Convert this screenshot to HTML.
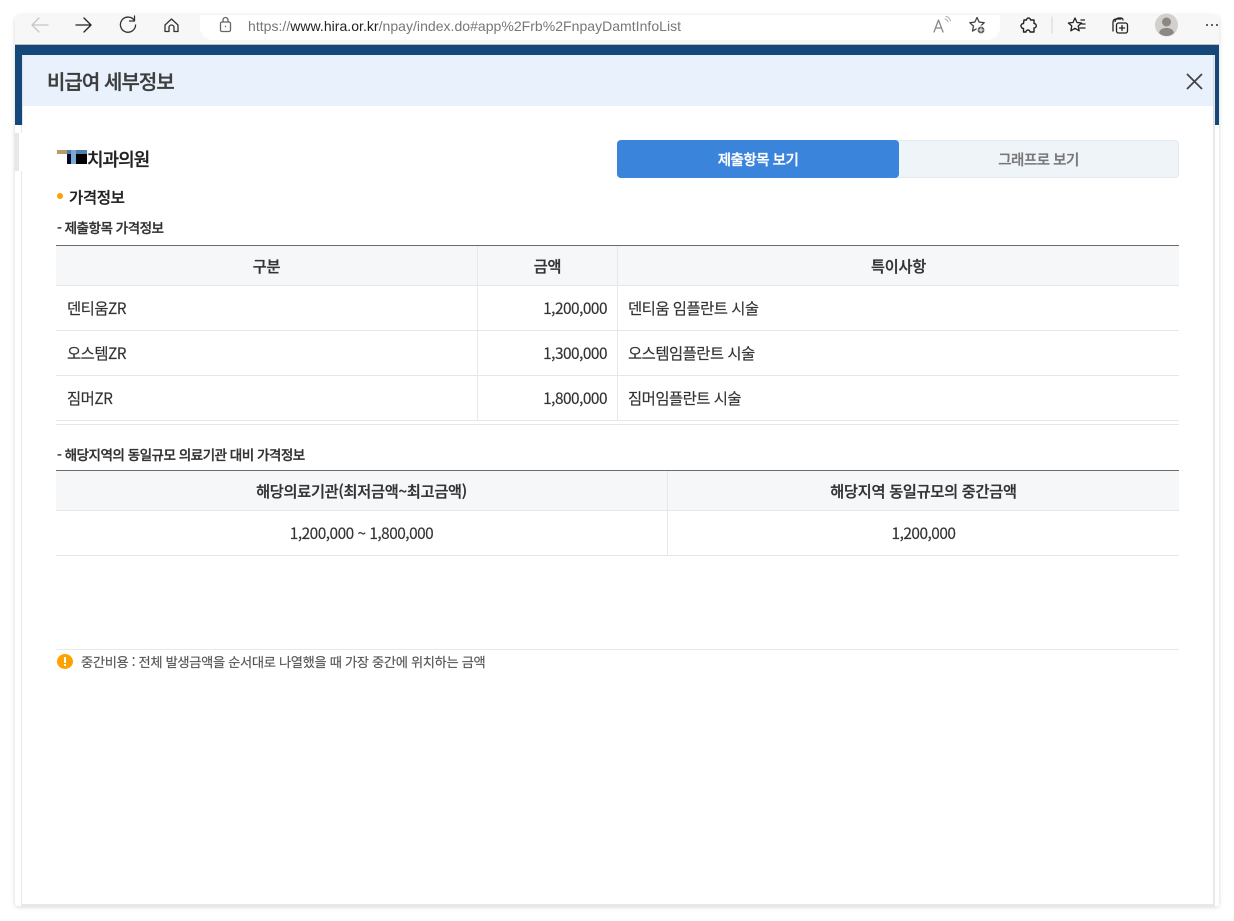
<!DOCTYPE html>
<html lang="ko"><head><meta charset="utf-8"><title>비급여 세부정보</title>
<style>
html,body{margin:0;padding:0;background:#fff}
body{width:1234px;height:921px;position:relative;overflow:hidden;font-family:"Noto Sans CJK KR","Liberation Sans",sans-serif;color:#333}
.a{position:absolute}
.t{position:absolute;white-space:nowrap;line-height:20px;height:20px;-webkit-text-stroke:.15px currentColor}
.b{font-weight:500;-webkit-text-stroke:.3px currentColor}
.h{font-size:15.2px;letter-spacing:-.25px}
.r{font-size:15.4px;letter-spacing:-.5px}
.l{position:absolute;height:1px;background:#e6e6e6}
.v{position:absolute;width:1px;background:#e8e8e8}
svg{position:absolute;overflow:visible}
</style></head><body>
<!-- window -->
<div class="a" style="left:15px;top:15px;width:1204px;height:891px;background:#fff;border-radius:5px 5px 3px 3px;box-shadow:0 1px 5px rgba(0,0,0,.16)"></div>
<div class="a" style="left:15px;top:15px;width:1204px;height:29px;background:#f7f7f7;border-radius:5px 5px 0 0"></div>
<div class="a" style="left:15px;top:44px;width:1204px;height:1px;background:#bdbdbd"></div>
<div class="a" style="left:15px;top:45px;width:1204px;height:80px;background:#14477a"></div>
<div class="a" style="left:15px;top:125px;width:7px;height:8px;background:#fff"></div>
<div class="a" style="left:14px;top:133px;width:5px;height:38px;background:#e8e8e8"></div>
<div class="a" style="left:21px;top:125px;width:2px;height:8px;background:#e8e8e8"></div>
<div class="a" style="left:21px;top:171px;width:2px;height:735px;background:#e8e8e8"></div>
<div class="a" style="left:1213px;top:55px;width:2px;height:851px;background:#e8e8e8"></div>
<div class="a" style="left:1215px;top:125px;width:4px;height:781px;background:#fff"></div>
<div class="a" style="left:21px;top:904px;width:1194px;height:2px;background:#e8e8e8"></div>
<!-- address bar -->
<div class="a" style="left:200px;top:15px;width:800px;height:25px;background:#fff;border-radius:0 0 13px 13px"></div>
<svg style="left:0;top:0" width="1234" height="45" viewBox="0 0 1234 45" fill="none" stroke="#333" stroke-width="1.300" stroke-linecap="round" stroke-linejoin="round">
<path d="M32 25H48M39 18l-7 7 7 7" stroke="#c6c6c6"/>
<path d="M76 25H91M84 18l7 7-7 7" stroke="#222"/>
<path d="M134 20a7.600 7.600 0 1 0 1.600 5M134.500 16v5h-5" stroke="#333"/>
<path d="M165 25l6.500-6 6.500 6v6.500h-4v-4a2.500 2.500 0 0 0-5 0v4h-4z" stroke="#333"/>
<rect x="220.500" y="22" width="10" height="9.500" rx="1.500" stroke="#666"/><path d="M223 22v-2a2.500 2.500 0 0 1 5 0v2" stroke="#666"/><circle cx="225.500" cy="26.500" r=".7" fill="#666" stroke="none"/>
<path d="M934 32l4.500-12 4.500 12M935.500 28h6" stroke="#888"/><path d="M945 19a4 4 0 0 1 3 3M946 16.500a6 6 0 0 1 4.500 4.500" stroke="#aaa" stroke-width="1"/>
<path d="M977 17.500l2.200 4.600 5 .6-3.700 3.400 1 5-4.500-2.500-4.500 2.500 1-5-3.700-3.400 5-.6z" stroke="#444"/><circle cx="981" cy="30" r="4" fill="#555" stroke="#f7f7f7"/><path d="M979 30h4M981 28v4" stroke="#fff" stroke-width="1"/>
<path d="M1024 20h2.500a2 2 0 0 1 4 0h3.500v3.500a2.200 2.200 0 0 1 0 4.500v4h-4a2 2 0 0 0-4 0h-2.500v-3.500a2.400 2.400 0 0 1 0-5z" stroke="#222" stroke-width="1.400"/>
<path d="M1052 17v16" stroke="#ddd"/>
<path d="M1075 18l2 4.500 4.600.5-3.400 3 1 4.800-4.200-2.500-4.200 2.500 1-4.800-3.400-3 4.600-.5zM1081 20h3.500M1082 24h3M1080 28h5" stroke="#222"/>
<path d="M1113 31v-9a3 3 0 0 1 3-3h5" stroke="#222"/><path d="M1115 21.500a4 4 0 0 1 4-3.500h2a2 2 0 0 1 2 2" stroke="#222"/><rect x="1116.500" y="23" width="11" height="10" rx="2" stroke="#222"/><path d="M1122 25.500v5M1119.500 28h5" stroke="#222"/>
<circle cx="1166.500" cy="25" r="11.500" fill="#d2d0cd" stroke="none"/><circle cx="1166.500" cy="22" r="4.500" fill="#8b8884" stroke="none"/><path d="M1159 33c1-4 4-5 7.500-5s6.500 1 7.500 5a11 11 0 0 1-15 0z" fill="#8b8884" stroke="none"/>
<circle cx="1207" cy="25" r="1" fill="#333" stroke="none"/><circle cx="1212" cy="25" r="1" fill="#333" stroke="none"/><circle cx="1217" cy="25" r="1" fill="#333" stroke="none"/>
</svg>
<div class="a" style="left:248px;top:16px;line-height:20px;white-space:nowrap;font-size:14px;font-family:'Liberation Sans',sans-serif;color:#777;letter-spacing:.03px">https://<span style="color:#222">www.hira.or.kr</span>/npay/index.do#app%2Frb%2FnpayDamtInfoList</div>
<!-- modal -->
<div class="a" style="left:22px;top:55px;width:1191px;height:51px;background:#e9f1fc"></div>
<div class="a" style="left:22px;top:106px;width:1191px;height:798px;background:#fff"></div>
<div class="a" style="left:22px;top:55px;width:1px;height:70px;background:#dfe4ea"></div>
<div class="a" style="left:1213px;top:55px;width:1px;height:70px;background:#d6dbe1"></div>
<div class="t b" style="left:47px;top:71px;font-size:20px;color:#3d3d3d;letter-spacing:-.95px">비급여 세부정보</div>
<svg style="left:1186px;top:73px" width="17" height="17" fill="none" stroke="#444" stroke-width="1.800"><path d="M1 1l15 15M16 1L1 16"/></svg>
<!-- hospital name -->
<div class="a" style="left:57px;top:150px;width:10px;height:4px;background:#b99a66"></div>
<div class="a" style="left:67px;top:150px;width:20px;height:4px;background:#4f7fae"></div>
<div class="a" style="left:67px;top:154px;width:4px;height:10px;background:#06062a"></div>
<div class="a" style="left:71px;top:150px;width:5px;height:14px;background:#7aa9d6"></div>
<div class="a" style="left:76px;top:154px;width:11px;height:10px;background:#000"></div>
<div class="t b" style="left:87px;top:149px;font-size:18px;color:#222;letter-spacing:-1px">치과의원</div>
<!-- tabs -->
<div class="a" style="left:617px;top:140px;width:562px;height:38px;box-sizing:border-box;background:#eff4f9;border:1px solid #e4e9ef;border-radius:4px"></div>
<div class="a" style="left:617px;top:140px;width:282px;height:38px;background:#3a84dc;border-radius:4px"></div>
<div class="t b" style="left:617px;top:150px;width:282px;text-align:center;font-size:14.500px;color:#fff;letter-spacing:-.5px">제출항목 보기</div>
<div class="t b" style="left:898px;top:150px;width:281px;text-align:center;font-size:14.500px;color:#777;letter-spacing:-.5px">그래프로 보기</div>
<!-- section -->
<div class="a" style="left:57px;top:193px;width:6px;height:6px;border-radius:50%;background:#ff9f00"></div>
<div class="t b" style="left:69px;top:187px;font-size:15.500px;color:#222;letter-spacing:-.4px">가격정보</div>
<div class="t b" style="left:57px;top:217px;font-size:13.600px;color:#333;letter-spacing:-.55px">- 제출항목 가격정보</div>
<!-- table 1 -->
<div class="a" style="left:56px;top:246px;width:1123px;height:40px;background:#f6f7f9"></div>
<div class="a" style="left:56px;top:245px;width:1123px;height:1px;background:#6b6b6b"></div>
<div class="l" style="left:56px;top:285px;width:1123px"></div>
<div class="l" style="left:56px;top:330px;width:1123px"></div>
<div class="l" style="left:56px;top:375px;width:1123px"></div>
<div class="l" style="left:56px;top:420px;width:1123px"></div>
<div class="l" style="left:56px;top:424px;width:1123px"></div>
<div class="v" style="left:477px;top:246px;height:174px"></div>
<div class="v" style="left:617px;top:246px;height:174px"></div>
<div class="t b h" style="left:56px;top:256px;width:421px;text-align:center">구분</div>
<div class="t b h" style="left:478px;top:256px;width:139px;text-align:center">금액</div>
<div class="t b h" style="left:618px;top:256px;width:561px;text-align:center">특이사항</div>
<div class="t r" style="left:67px;top:298px">덴티움ZR</div>
<div class="t r" style="left:478px;top:298px;width:129px;text-align:right">1,200,000</div>
<div class="t r" style="left:628px;top:298px">덴티움 임플란트 시술</div>
<div class="t r" style="left:67px;top:343px">오스템ZR</div>
<div class="t r" style="left:478px;top:343px;width:129px;text-align:right">1,300,000</div>
<div class="t r" style="left:628px;top:343px">오스템임플란트 시술</div>
<div class="t r" style="left:67px;top:388px">짐머ZR</div>
<div class="t r" style="left:478px;top:388px;width:129px;text-align:right">1,800,000</div>
<div class="t r" style="left:628px;top:388px">짐머임플란트 시술</div>
<!-- table 2 -->
<div class="t b" style="left:57px;top:444px;font-size:13.600px;color:#333;letter-spacing:-.55px">- 해당지역의 동일규모 의료기관 대비 가격정보</div>
<div class="a" style="left:56px;top:471px;width:1123px;height:40px;background:#f6f7f9"></div>
<div class="a" style="left:56px;top:470px;width:1123px;height:1px;background:#6b6b6b"></div>
<div class="l" style="left:56px;top:510px;width:1123px"></div>
<div class="l" style="left:56px;top:555px;width:1123px"></div>
<div class="v" style="left:667px;top:471px;height:84px"></div>
<div class="t b h" style="left:56px;top:481px;width:611px;text-align:center">해당의료기관(최저금액~최고금액)</div>
<div class="t b h" style="left:668px;top:481px;width:511px;text-align:center">해당지역 동일규모의 중간금액</div>
<div class="t r" style="left:56px;top:523px;width:611px;text-align:center">1,200,000 ~ 1,800,000</div>
<div class="t r" style="left:668px;top:523px;width:511px;text-align:center">1,200,000</div>
<!-- note -->
<div class="l" style="left:56px;top:649px;width:1123px;background:#e8e8e8"></div>
<div class="a" style="left:57px;top:654px;width:16px;height:15px;border-radius:50%;background:#ffa200"></div>
<div class="a" style="left:64px;top:657px;width:2px;height:6px;background:#fff"></div>
<div class="a" style="left:64px;top:664px;width:2px;height:2px;background:#fff"></div>
<div class="t" style="left:81px;top:652px;font-size:13.250px;color:#555;letter-spacing:-.34px">중간비용 : 전체 발생금액을 순서대로 나열했을 때 가장 중간에 위치하는 금액</div>
</body></html>
